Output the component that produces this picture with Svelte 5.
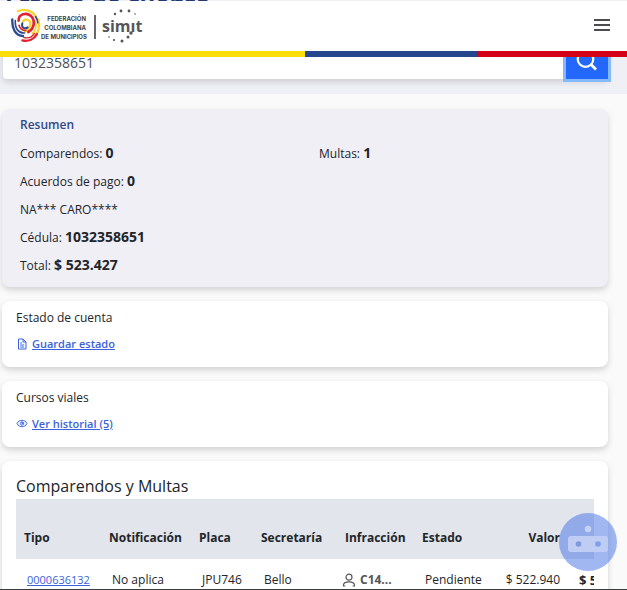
<script>
  let query = $state('1032358651');
  const summary = [
    { label: 'Comparendos:', value: '0' },
    { label: 'Multas:', value: '1' },
    { label: 'Acuerdos de pago:', value: '0', full: true },
    { label: 'NA*** CARO****', value: '', full: true },
    { label: 'Cédula:', value: '1032358651', full: true },
    { label: 'Total:', value: '$ 523.427', full: true },
  ];
  const columns = ['Tipo', 'Notificación', 'Placa', 'Secretaría', 'Infracción', 'Estado', 'Valor', ''];
</script>

<div class="page">
  <header>
    <div class="bar">
      <a class="brand" href="#inicio" aria-label="Simit">
        <svg class="swirl" width="30" height="35" viewBox="0 0 90 105" fill="none" stroke-width="7" stroke-linecap="round">
          <g stroke="#f9d32c">
            <path d="M21 10C40 0 66 8 76 28" />
            <path d="M82 34C88 54 82 74 72 84" />
            <path d="M36 40C42 30 60 34 58 50C57 62 46 66 42 72" stroke-width="7" />
            <path d="M72 40C78 54 74 70 64 76" stroke-width="5" />
          </g>
          <g stroke="#2b4b91">
            <path d="M4 34C2 62 14 84 36 84" />
            <path d="M13 38C11 60 22 76 40 75" stroke-width="5" />
            <path d="M34 46C30 60 42 64 50 58" stroke-width="6" />
            <path d="M74 26C78 32 80 38 80 44" stroke-width="5" />
          </g>
          <g stroke="#df2434">
            <path d="M23 38C22 18 46 12 60 24C74 38 70 62 52 72" stroke-width="8" />
            <path d="M24 52C28 64 36 68 44 67" stroke-width="5" />
            <path d="M34 97C52 102 70 94 78 78" />
            <path d="M38 88C52 92 64 86 70 76" stroke-width="4" />
          </g>
        </svg>
        <span class="fed">FEDERACIÓN<br />COLOMBIANA<br />DE MUNICIPIOS</span>
        <span class="rule"></span>
        <span class="simit">simıt
          <svg width="42" height="36" viewBox="0 0 42 36" fill="#555659" aria-hidden="true">
            <circle cx="13" cy="6" r="1.2" /><circle cx="19" cy="3" r="1.4" />
            <circle cx="27" cy="3" r="1.4" /><circle cx="33" cy="6" r=".8" />
            <circle cx="7" cy="29" r=".8" /><circle cx="12" cy="32" r="1.1" />
            <circle cx="20" cy="33" r="1.5" /><circle cx="26" cy="29" r="1.5" />
            <circle cx="29" cy="25" r="1.7" />
          </svg>
        </span>
      </a>
      <button class="menu" aria-label="Menú">
        <svg width="16" height="13" viewBox="0 0 16 13" fill="#4b4c50"><path d="M0 0h16v2H0zM0 5h16v2H0zM0 10h16v2H0z" /></svg>
      </button>
    </div>
    <div class="flag"><i class="yellow"></i><i class="blue"></i><i class="red"></i></div>
  </header>

  <section class="hero">
    <h1>Estado de cuenta</h1>
    <form class="search" onsubmit={(e) => e.preventDefault()}>
      <input aria-label="Número de documento o placa" bind:value={query} />
      <button aria-label="Buscar">
        <svg width="22" height="22" viewBox="0 0 22 22" fill="none" stroke="#fff" stroke-width="2.2"><circle cx="9.5" cy="9" r="7.8" /><path d="M15 14.500l5 5" stroke-width="2.8" /></svg>
      </button>
    </form>
  </section>

  <main>
    <section class="card summary">
      <h2>Resumen</h2>
      <div class="facts">
        {#each summary as item}
          <p class:full={item.full}>{item.label} <strong>{item.value}</strong></p>
        {/each}
      </div>
    </section>

    <section class="card">
      <h3>Estado de cuenta</h3>
      <a class="action" href="#estado">
        <svg width="12" height="12" viewBox="0 0 12 12" fill="none" stroke="#3a62dc" stroke-width="1"><path d="M2.5 1h4.5l3 3v7H2.5zM7 1v3h3M4.2 5h2M4.2 7h4M4.2 9h4" /></svg>
        <span>Guardar estado</span>
      </a>
    </section>

    <section class="card">
      <h3>Cursos viales</h3>
      <a class="action" href="#historial">
        <svg width="12" height="12" viewBox="0 0 12 12" fill="none" stroke="#3a62dc" stroke-width="1"><path d="M1 5.500C3 1.200 9 1.200 11 5.500C9 9.800 3 9.800 1 5.500z" /><circle cx="6" cy="5.5" r="1.7" /><path d="M6 4v1.500h1.500" /></svg>
        <span>Ver historial (5)</span>
      </a>
    </section>

    <section class="card fines">
      <h2>Comparendos y Multas</h2>
      <div class="scroller">
        <table>
          <colgroup><col class="w85" /><col class="w90" /><col class="w62" /><col class="w84" /><col class="w77" /><col class="w77" /><col class="w77" /><col class="w78" /></colgroup>
          <thead>
            <tr>{#each columns as column, i}<th class:right={i > 5}>{column}</th>{/each}</tr>
          </thead>
          <tbody>
            <tr>
              <td><a class="ticket" href="#comparendo">0000636132</a></td>
              <td>No aplica</td>
              <td>JPU746</td>
              <td>Bello</td>
              <td class="code"><div>
                <svg width="14" height="14" viewBox="0 0 14 14" fill="none" stroke="#55565a" stroke-width="1.2"><circle cx="7" cy="4.2" r="3" /><path d="M1.500 13V12C1.500 9.800 3.500 8.800 7 8.800S12.500 9.800 12.500 12V13M1 13h2.400M10.600 13H13" /></svg>
                C14...</div>
              </td>
              <td>Pendiente</td>
              <td class="right">$ 522.940</td>
              <td class="right total"><strong>$ 523.427</strong></td>
            </tr>
          </tbody>
        </table>
      </div>
    </section>
  </main>

  <button class="bot" aria-label="Asistente virtual">
    <svg width="40" height="34" viewBox="0 0 40 34"><circle cx="20" cy="4" r="3.2" fill="#c6d3f6" /><rect y="11" width="40" height="16" rx="3" fill="#bfcdf4" /><circle cx="10.500" cy="19" r="2.8" fill="#7f9ae0" /><circle cx="30" cy="19" r="2.8" fill="#7f9fee" /></svg>
  </button>
</div>

<style>
  :global(body) { margin: 0; }
  .page {
    position: relative;
    box-sizing: border-box;
    height: 100vh;
    overflow: hidden;
    border-bottom: 1px solid #3b3c40;
    background: #fafafa;
    color: #212529;
    font: 12px/20px "Open Sans", "Noto Sans", sans-serif;
  }
  h1, h2, h3, p { margin: 0; }
  button { padding: 0; border: 0; cursor: pointer; }
  svg { display: block; flex: none; }
  a { color: #3a62dc; }

  header { position: absolute; inset: 1px 0 auto; z-index: 2; background: #fff; }
  .bar { display: flex; align-items: center; justify-content: space-between; box-sizing: border-box; height: 50px; padding: 0 17px 2px 11px; }
  .brand { display: flex; align-items: center; color: #414246; text-decoration: none; }
  .fed { display: block; width: 45px; padding-top: 5px; font: 700 6px/9px Inter, "Open Sans", sans-serif; text-align: right; white-space: nowrap; }
  .rule { width: 2px; height: 24px; margin: 4px 6px 0 8px; background: #66676b; }
  .simit { position: relative; padding-top: 2px; font-size: 16px; font-weight: 700; line-height: 24px; color: #555659; }
  .simit svg { position: absolute; left: 0; top: -4px; }
  .menu { background: none; }
  .flag { display: flex; height: 6px; }
  .yellow { flex: 305; background: #fcdc0b; }
  .blue { flex: 172; background: #24468c; }
  .red { flex: 150; background: #d40018; }

  .hero { height: 94px; background: #efeff6; overflow: hidden; }
  h1 { display: flex; align-items: flex-end; height: 3px; padding: 0 5px; color: #24386f; font-size: 24px; line-height: 1px; }
  .search { display: flex; height: 37px; margin: 39px 19px 0 3px; border-radius: 4px; background: #fff; box-shadow: 0 3px 6px rgba(0, 0, 0, .14); }
  .search input { flex: 1; min-width: 0; border: 0; padding: 5px 11px 0; background: none; color: #495057; font: 14px/20px "Open Sans", "Noto Sans", sans-serif; outline: none; }
  .search button { display: grid; place-items: center; width: 42px; background: #2468fb; box-shadow: 0 0 0 3px #84b9fc; }

  main { display: flex; flex-direction: column; gap: 14px; padding: 15px 19px 0 2px; }
  .card { border-radius: 8px; padding: 6px 14px 11px; background: #fff; box-shadow: 0 3px 6px rgba(0, 0, 0, .16); }
  .summary { padding: 2px 18px 8px; background: #f0eff6; }
  .summary h2 { color: #324a86; font-size: 12px; font-weight: 600; line-height: 28px; }
  .facts { display: grid; grid-template-columns: 299px 1fr; line-height: 28px; }
  .facts p { height: 28px; }
  .facts strong { font-size: 14px; }
  .full { grid-column: 1 / -1; }
  h3 { font-size: 12px; font-weight: 400; line-height: 22px; }
  .action { display: flex; align-items: center; gap: 4px; height: 24px; margin-top: 3px; font-size: 11px; font-weight: 600; }
  .fines { padding-top: 12px; }
  .fines h2 { font-size: 16px; font-weight: 500; line-height: 26px; }
  .scroller { overflow: hidden; }
  table { width: 630px; table-layout: fixed; border-collapse: collapse; }
  .w85 { width: 85px; } .w90 { width: 90px; } .w62 { width: 62px; } .w84 { width: 84px; } .w77 { width: 77px; } .w78 { width: 78px; }
  th { height: 60px; padding: 18px 8px 0; box-sizing: border-box; background: #e2e5ec; text-align: left; font-weight: 700; font-size: 12px; }
  td { padding: 11px 8px 10px 11px; font-size: 12px; white-space: nowrap; }
  .right { text-align: right; }
  .ticket { font-size: 11px; }
  .total { font-size: 13px; }
  .code { padding-left: 5px; color: #55565a; font-weight: 700; }
  .code div { display: flex; align-items: center; gap: 4px; }

  .bot { position: absolute; right: 10px; top: 513px; z-index: 3; display: grid; place-items: center; width: 58px; height: 58px; border-radius: 50%; background: rgba(66, 112, 228, .5); }
</style>
